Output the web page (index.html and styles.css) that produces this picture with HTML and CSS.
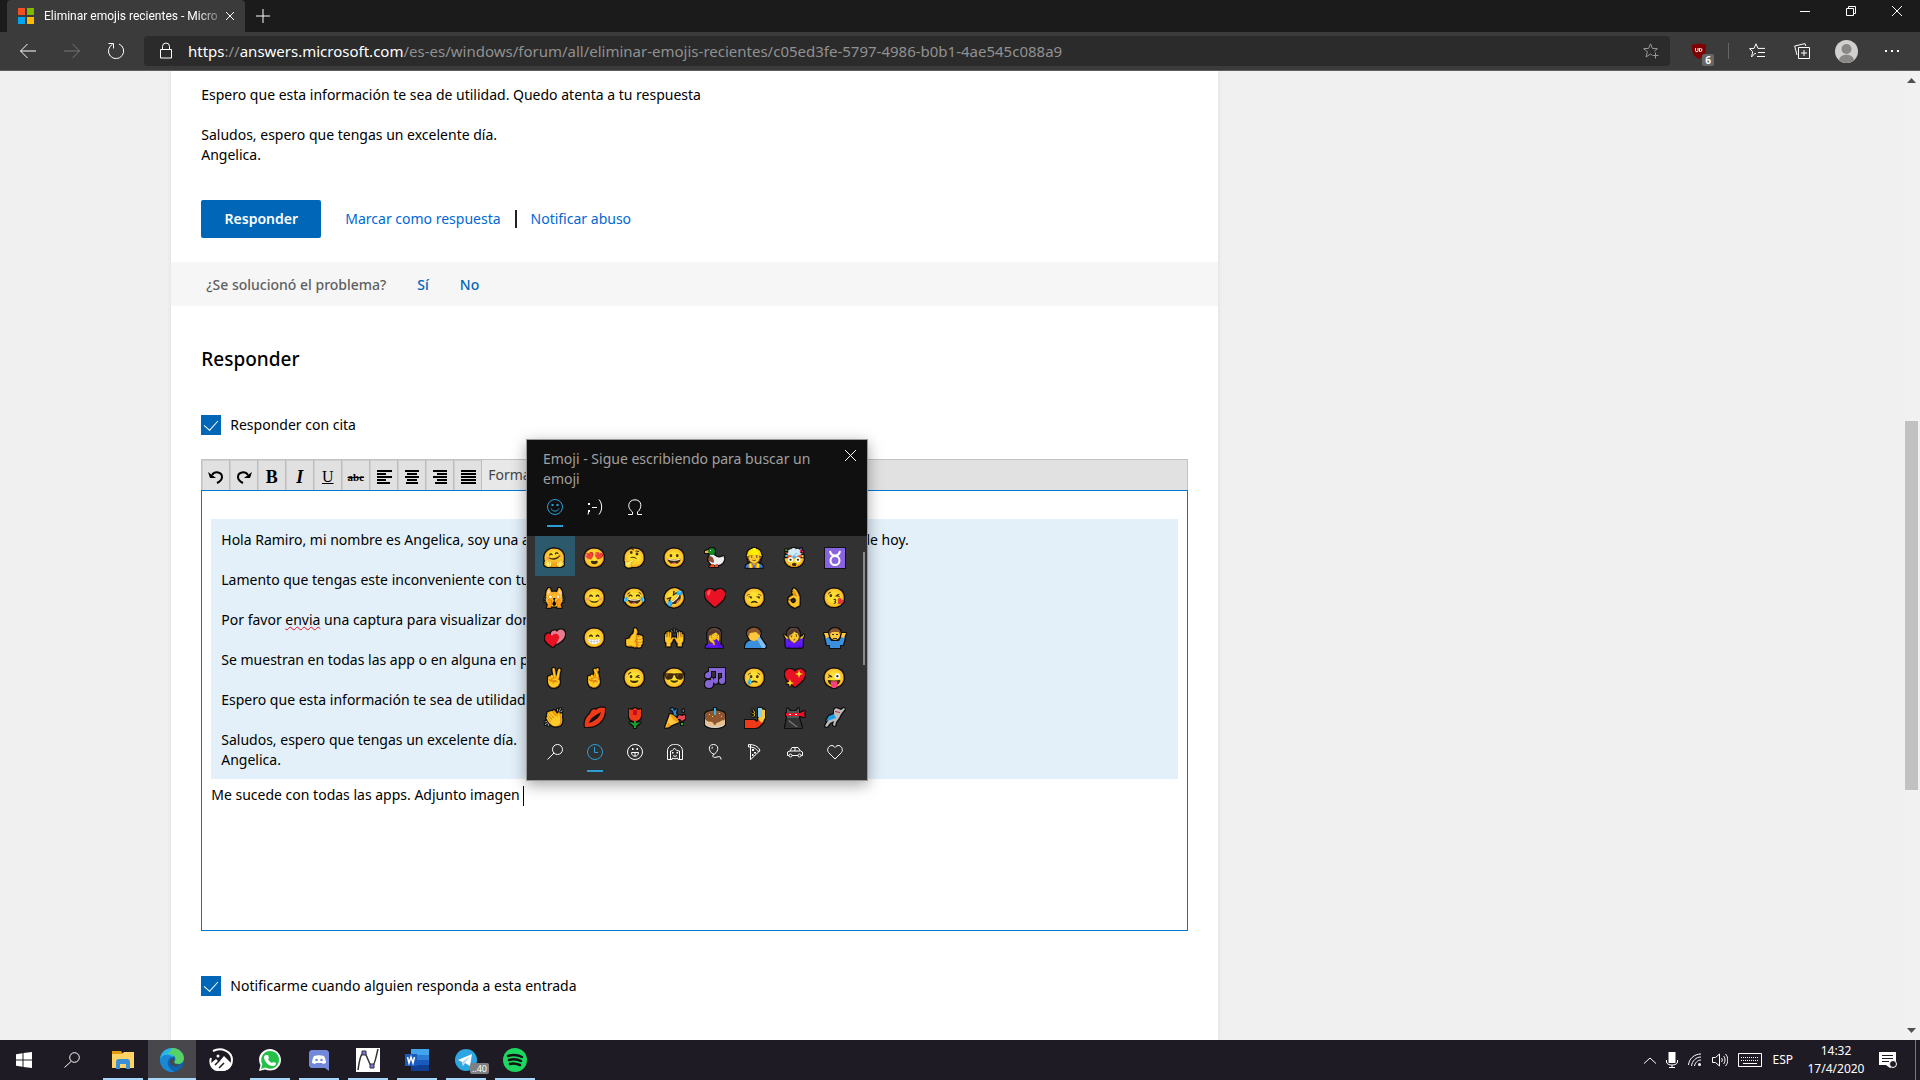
FILE: index.html
```
<!DOCTYPE html>
<html lang="es">

<head>
    <meta charset="UTF-8">
    <meta name="viewport" content="width=device-width, initial-scale=1.0">
    <title>Eliminar emojis recientes - Microsoft Community</title>
    <link rel="stylesheet" href="styles.css">
</head>

<body>
    <div class="tabbar">
        <div class="tab">
            <svg class="favicon" width="16" height="16" viewBox="0 0 16 16"><path fill="#f25022" d="M0 0h7v7H0z"/><path fill="#7fba00" d="M9 0h7v7H9z"/><path fill="#00a4ef" d="M0 9h7v7H0z"/><path fill="#ffb900" d="M9 9h7v7H9z"/></svg>
            <span class="tab-title">Eliminar emojis recientes - Micro</span>
            <button class="tab-close" aria-label="Cerrar pestaña"><svg width="10" height="10" viewBox="0 0 10 10"><path d="M1 1l8 8M9 1l-8 8"/></svg></button>
        </div>
        <button class="new-tab" aria-label="Nueva pestaña"><svg width="14" height="14" viewBox="0 0 14 14"><path d="M7 0v14M0 7h14"/></svg></button>
        <div class="window-buttons">
            <button aria-label="Minimizar"><svg width="10" height="10" viewBox="0 0 10 10"><path d="M0 5.5h10"/></svg></button>
            <button aria-label="Restaurar"><svg width="10" height="10" viewBox="0 0 10 10"><path d="M.5 2.5h7v7h-7zM2.500 2.500v-2h7v7h-2"/></svg></button>
            <button aria-label="Cerrar"><svg width="10" height="10" viewBox="0 0 10 10"><path d="M0 0l10 10M10 0L0 10"/></svg></button>
        </div>
    </div>

    <div class="navbar">
        <button class="nav-button" aria-label="Atrás"><svg width="18" height="16" viewBox="0 0 18 16"><path d="M17 8H1.500M8.500 1l-7 7 7 7"/></svg></button>
        <button class="nav-button dim" aria-label="Adelante"><svg width="18" height="16" viewBox="0 0 18 16"><path d="M1 8h15.500M9.500 1l7 7-7 7"/></svg></button>
        <button class="nav-button" aria-label="Actualizar"><svg width="18" height="18" viewBox="0 0 18 18"><path d="M12 2a7.600 7.600 0 1 1-6.500.3M1.500 1.500h5v5"/></svg></button>
        <div class="address">
            <svg class="lock" width="12" height="18" viewBox="0 0 12 18"><path d="M.5 7.500h11v8.500H.500zM2.500 7.500V4.500a3.500 3.500 0 0 1 7 0v3"/></svg>
            <span class="url"><b>https</b>://<b>answers.microsoft.com</b>/es-es/windows/forum/all/eliminar-emojis-recientes/c05ed3fe-5797-4986-b0b1-4ae545c088a9</span>
            <button class="star" aria-label="Agregar a favoritos"><svg width="16" height="16" viewBox="0 0 16 16"><path d="M9 12l-1.500-1L3 14l1.400-5.300L.6 5.700l5-.3L7.500.800l1.900 4.600 5 .3-3 2.500M12.500 9.500v6M9.500 12.500h6"/></svg></button>
        </div>
        <button class="ext" aria-label="uBlock Origin">
            <svg width="14" height="16" viewBox="0 0 14 16"><path fill="#800000" d="M7 0c2 1.300 4.500 1.700 7 1.500C14.300 9 13 13 7 16 1 13-.3 9 0 1.500 2.500 1.700 5 1.300 7 0z"/><path fill="none" stroke="#fff" d="M3.500 5v2.500a1 1 0 0 0 2.500 0V5M7.500 5.500v3h1a1.500 1.500 0 0 0 0-3z"/></svg>
            <span class="ext-count">6</span>
        </button>
        <span class="nav-line"></span>
        <button class="nav-tool" aria-label="Favoritos"><svg width="16" height="16" viewBox="0 0 16 16"><path d="M7 11l-1-.8L2.500 14l1.200-5.300L.5 5.700l4.500-.3L7 .8l2 4.600h7M9 9.500h7M8 13.500h8"/></svg></button>
        <button class="nav-tool" aria-label="Colecciones"><svg width="16" height="16" viewBox="0 0 16 16"><path d="M4.500 4.500h11v11h-11zM10 7v6M7 10h6M3 12L.7 3 11 .6l.8 2.400"/></svg></button>
        <button class="nav-tool" aria-label="Perfil"><svg class="avatar" width="23" height="23" viewBox="0 0 23 23"><circle cx="11.500" cy="11.500" r="11.500" fill="#d2d0ce"/><circle cx="11.500" cy="9" r="5" fill="#8a8886"/><path fill="#8a8886" d="M4 20c1-7 14-7 15 0-4 4-11 4-15 0z"/></svg></button>
        <button class="nav-tool" aria-label="Más"><svg width="14" height="4" viewBox="0 0 14 4"><path class="solid" d="M0 1h2v2H0zM6 1h2v2H6zM12 1h2v2h-2z"/></svg></button>
    </div>

    <div class="viewport">
        <div class="page">
            <main class="card">
                <div class="answer">
                    <p>Espero que esta información te sea de utilidad. Quedo atenta a tu respuesta</p>
                    <p>Saludos, espero que tengas un excelente día.<br>Angelica.</p>
                    <div class="actions">
                        <button class="reply">Responder</button>
                        <a href="#">Marcar como respuesta</a>
                        <span class="separator"></span>
                        <a href="#">Notificar abuso</a>
                    </div>
                </div>
                <div class="solved">
                    <span>¿Se solucionó el problema?</span>
                    <a href="#">Sí</a>
                    <a href="#">No</a>
                </div>
                <div class="form">
                    <h2>Responder</h2>
                    <label class="check"><input type="checkbox" checked>Responder con cita</label>
                    <div class="toolbar">
                        <button aria-label="Deshacer"><svg width="16" height="16" viewBox="0 0 16 16"><path class="thick" d="M4 6c3-4.500 10-3 10 2 0 3-2 4.500-5 6"/><path d="M0 3l2 6h6z"/></svg></button>
                        <button aria-label="Rehacer"><svg width="16" height="16" viewBox="0 0 16 16"><path class="thick" d="M12 6C9 1.500 2 3 2 8c0 3 2 4.500 5 6"/><path d="M16 3l-2 6H8z"/></svg></button>
                        <button class="serif bold" aria-label="Negrita">B</button>
                        <button class="serif bold italic" aria-label="Cursiva">I</button>
                        <button class="serif underline" aria-label="Subrayado">U</button>
                        <button class="serif strike" aria-label="Tachado">abc</button>
                        <button aria-label="Alinear a la izquierda"><svg width="16" height="16" viewBox="0 0 16 16"><path d="M1 1h15v2H1zM1 4h9v2H1zM1 7h15v2H1zM1 10h9v2H1zM1 13h13v2H1z"/></svg></button>
                        <button aria-label="Centrar"><svg width="16" height="16" viewBox="0 0 16 16"><path d="M1 1h14v2H1zM3 4h10v2H3zM1 7h14v2H1zM3 10h10v2H3zM2 13h12v2H2z"/></svg></button>
                        <button aria-label="Alinear a la derecha"><svg width="16" height="16" viewBox="0 0 16 16"><path d="M1 1h14v2H1zM5 4h10v2H5zM1 7h14v2H1zM5 10h10v2H5zM3 13h12v2H3z"/></svg></button>
                        <button aria-label="Justificar"><svg width="16" height="16" viewBox="0 0 16 16"><path d="M1 1h15v2H1zM1 4h15v2H1zM1 7h15v2H1zM1 10h15v2H1zM1 13h15v2H1z"/></svg></button>
                        <select aria-label="Formato"><option>Formato</option></select>
                    </div>
                    <div class="editor" role="textbox" aria-label="Respuesta" contenteditable="true" spellcheck="false">
                        <blockquote>
                            <p>Hola Ramiro, mi nombre es Angelica, soy una asesora independiente y te ayudo en tu duda el día de hoy.</p>
                            <p>Lamento que tengas este inconveniente con tu equipo.</p>
                            <p>Por favor <span class="misspelled">envia</span> una captura para visualizar donde se muestran.</p>
                            <p>Se muestran en todas las app o en alguna en particular.</p>
                            <p>Espero que esta información te sea de utilidad. Quedo atenta a tu respuesta</p>
                            <p>Saludos, espero que tengas un excelente día.<br>Angelica.</p>
                        </blockquote>
                        <p>Me sucede con todas las apps. Adjunto imagen <span class="caret"></span></p>
                    </div>
                    <label class="check"><input type="checkbox" checked>Notificarme cuando alguien responda a esta entrada</label>
                </div>
            </main>
        </div>
        <div class="scrollbar">
            <svg width="9" height="5" viewBox="0 0 9 5"><path d="M4.500 0L9 5H0z"/></svg>
            <div class="track"><div class="thumb"></div></div>
            <svg width="9" height="5" viewBox="0 0 9 5"><path d="M0 0h9L4.500 5z"/></svg>
        </div>
    </div>

    <div class="emoji-panel">
        <div class="emoji-head">
            <div class="emoji-title">
                <span>Emoji - Sigue escribiendo para buscar un emoji</span>
                <button aria-label="Cerrar"><svg width="11" height="11" viewBox="0 0 11 11"><path d="M0 0l11 11M11 0L0 11"/></svg></button>
            </div>
            <div class="emoji-tabs">
                <button class="active" aria-label="Emoji"><svg width="16" height="16" viewBox="0 0 16 16"><circle cx="8" cy="8" r="7.500"/><path d="M4 9.500c1.500 3.500 6.500 3.500 8 0"/><path class="solid" d="M4.500 5h2v2h-2zM9.500 5h2v2h-2z"/></svg></button>
                <button aria-label="Kaomoji"><svg width="16" height="16" viewBox="0 0 16 16"><path d="M5 8.500h5M12 .500c3.500 4 3.500 11 0 15M2 11.500l-1 4"/><path class="solid" d="M1 4h2v2H1zM1 11h2v2H1z"/></svg></button>
                <button aria-label="Símbolos"><svg width="16" height="16" viewBox="0 0 16 16"><path d="M1 15.500h4.500V13C-.5 9 1 .8 8 .8S15.500 9 10.500 13v2.500H15"/></svg></button>
            </div>
        </div>
        <div class="emoji-body">
            <div class="emoji-grid">
                <button class="active"><span>🤗</span></button>
                <button><span>😍</span></button>
                <button><span>🤔</span></button>
                <button><span>😀</span></button>
                <button aria-label="Pato"><svg viewBox="0 0 22 22"><path fill="#ffb02e" d="M1 4l4-1v3H1z"/><path fill="#108a22" d="M4 4c1-4 7-4 7 0 0 2-1 3-1 5H6c0-3-2-3-2-5z"/><path fill="#eee" d="M6 8h4c3 3 6 3 10 1-1 2 1 2 0 4-2 5-5 5-9 5-5 0-8-5-5-10z"/><path fill="#8e4a33" d="M5 9c3 0 5 2 5 6-1 2-5-1-6-2z"/><path fill="#f4511e" d="M8 17h2v3H5zM12 17h2v3h-4z"/><path fill="#fff" d="M6 3h1v1H6z"/></svg></button>
                <button><span>👷</span></button>
                <button><span>🤯</span></button>
                <button aria-label="Tauro"><svg viewBox="0 0 22 22"><path fill="#8763e0" d="M1 1h20v20H1z"/><circle class="line" cx="11" cy="13.500" r="4.500"/><path class="line" d="M6 4c1 6 9 6 10 0"/></svg></button>

                <button><span>🙀</span></button>
                <button><span>😊</span></button>
                <button><span>😂</span></button>
                <button><span>🤣</span></button>
                <button aria-label="Corazón"><svg viewBox="0 0 22 22"><path fill="#e81224" d="M11 20C5 15 1 12 1 7c0-5 7-7 10-2 3-5 10-3 10 2 0 5-4 8-10 13z"/><path fill="#ff5b5b" d="M3 7c0-3 2-4 4-4L5 9z"/></svg></button>
                <button><span>😒</span></button>
                <button><span>👌</span></button>
                <button><span>😘</span></button>

                <button aria-label="Dos corazones"><svg viewBox="0 0 22 22"><path fill="#e87c8e" d="M13 17c5-3 8-6 8-10 0-5-6-6-8-2-2-3-7-1-6 3 0 4 3 6 6 9z"/><path fill="#e81224" d="M9 20c-4-3-8-5-8-9 0-5 5-6 7-2 2-4 8-2 7 2-1 4-4 7-6 9z"/></svg></button>
                <button><span>😁</span></button>
                <button><span>👍</span></button>
                <button><span>🙌</span></button>
                <button><span>🤦‍♀️</span></button>
                <button aria-label="Hombre con la mano en la cara"><svg viewBox="0 0 22 22"><path fill="#3b8fdd" d="M1 21c0-6 4-8 9-8 6 0 10 3 10 8z"/><circle cx="10" cy="8" r="6" fill="#ffc83d"/><path fill="#8e562e" d="M3 8c-1-9 13-10 14-1l-2 1-3-3-6 1-1 3z"/><path fill="#ffc83d" d="M8 8l5-2 3 4-2 4z"/><path fill="#7fbdf2" d="M13 12l3-2 6 9-1 2h-3z"/></svg></button>
                <button><span>🤷‍♀️</span></button>
                <button aria-label="Hombre encogiéndose de hombros"><svg viewBox="0 0 22 22"><path fill="#3b8fdd" d="M1 10l3-1 3 5h8l3-5 3 1-2 8h-3v3H6v-3H3z"/><path fill="#ffc83d" d="M0 6h4l1 4-3 1zM22 6h-4l-1 4 3 1z"/><circle cx="11" cy="8" r="5" fill="#ffc83d"/><path fill="#8e562e" d="M5 8c-1-9 13-9 12 0l-2-3H8z"/><path fill="#333" d="M8 7h2v1H8zM12 7h2v1h-2zM9 11h4v1H9z"/></svg></button>

                <button><span>✌️</span></button>
                <button><span>🤞</span></button>
                <button><span>😉</span></button>
                <button><span>😎</span></button>
                <button aria-label="Notas musicales"><svg viewBox="0 0 22 22"><path fill="#8764d8" d="M1 9c0-3 2-4 4-4V1h16v13c0 4-6 4-6 0 0-3 2-3 3-3V6h-4v8c0 4-5 3-5 0 0-2 1-3 3-3V4H7v5c0 3-6 3-6 0z"/><circle cx="5" cy="17" r="4" fill="#8764d8"/><path fill="#8764d8" d="M7 11h2v6H7z"/></svg></button>
                <button><span>😢</span></button>
                <button aria-label="Corazón brillante"><svg viewBox="0 0 22 22"><path fill="#e81224" d="M11 20C5 15 1 12 1 7c0-5 7-7 10-2 3-5 10-3 10 2 0 5-4 8-10 13z"/><path fill="#ffe11a" d="M15 3l1 3 3 1-3 1-1 3-1-3-3-1 3-1zM6 12l1 3 3 1-3 1-1 3-1-3-3-1 3-1z"/></svg></button>
                <button><span>😜</span></button>

                <button><span>👏</span></button>
                <button aria-label="Beso"><svg viewBox="0 0 22 22"><path fill="#f03a17" d="M1 20c-1-7 2-11 5-13 1-4 4-6 6-4 3-3 6-2 9-2 0 6-1 10-4 13-4 5-9 6-16 6z"/><path fill="#111" d="M5 16c1-5 7-8 12-11-1 5-6 9-12 11z"/></svg></button>
                <button aria-label="Rosa"><svg viewBox="0 0 22 22"><path fill="#16a12a" d="M10 12h2v9h-2zM5 15l5 1v3zM17 15l-5 1v3z"/><path fill="#f03a17" d="M5 2l3 1 3-2 3 2 3-1v7c0 3-3 5-6 5s-6-2-6-5z"/><path fill="#c50f1f" d="M9 3h4v5H9z"/></svg></button>
                <button aria-label="Fiesta"><svg viewBox="0 0 22 22"><path fill="#ffc83d" d="M1 21l5-14 9 8z"/><path fill="#f59b14" d="M3 21l4-2-3-4zM6 7c3 0 9 5 9 8-3 1-8-4-9-8z"/><path fill="#2a8fd8" d="M6 2l3-1 1 3 3-2-1 4 1 3-3-1-1-4zM18 4l2-2v3z"/><path fill="#e74856" d="M13 12l2-4 3 1 3-1v4l-3 2-2-2z"/><path fill="#16c60c" d="M17 16h2v2h-2z"/></svg></button>
                <button aria-label="Torta"><svg viewBox="0 0 22 22"><ellipse cx="11" cy="17" rx="10" ry="4" fill="#ddd"/><path fill="#e8c193" d="M1 8h20v9c-4 4-16 4-20 0z"/><path fill="#8e562e" d="M1 8c0-6 20-6 20 0v4c-2 3-2 0-4 2s-3 0-5 3-2-1-4-2-4 1-7-3z"/><path fill="#31b6ea" d="M10 1h2v7h-2z"/><path fill="#ffc83d" d="M5 7h1v1H5zM15 6h1v1h-1zM8 9h1v1H8zM17 9h1v1h-1z"/></svg></button>
                <button aria-label="Selfi"><svg viewBox="0 0 22 22"><path fill="#f03a17" d="M1 13h9l3 2 3-4 4 3c-3 4-6 7-9 7H1z"/><path fill="#ffc83d" d="M16 2l5 1v8l-3 5-4-4 2-4z"/><path fill="#7fd0f5" d="M14 1h4v9h-4z"/><path fill="#ffe11a" d="M8 1l3 4 0 2zM6 5l5 2v1zM7 10l4-2v1z"/></svg></button>
                <button aria-label="Gato ninja"><svg viewBox="0 0 22 22"><path fill="#555" d="M3 1l3 3h6l3-3v10H3z"/><path fill="#333" d="M3 11h12l3 10H1z"/><path fill="#e81224" d="M2 6h14l5-2-1 3 1 3-5-1H2z"/><path fill="#fff" d="M5 7h2v1H5zM11 7h2v1h-2z"/><path fill="#777" d="M5 13l9 7h-2l-8-6z"/></svg></button>
                <button aria-label="Gato volador"><svg viewBox="0 0 22 22"><path fill="#bbb" d="M10 3l2-2 5 2 3-2 1 1-4 5-2 4-3 4-1 4-2-1 1-4-4 2-3 4-2-1 4-7 5-4z"/><path fill="#1e9fe8" d="M10 7l2 4-6 2-4 1 3-5z"/><path fill="#e81224" d="M11 4l5 1v1l-5-1z"/></svg></button>
            </div>
            <div class="emoji-scroll"></div>
        </div>
        <div class="emoji-cats">
            <button aria-label="Buscar"><svg width="16" height="16" viewBox="0 0 16 16"><circle cx="10.500" cy="5.500" r="5"/><path d="M7 9l-6.500 6.500"/></svg></button>
            <button class="active" aria-label="Recientes"><svg width="16" height="16" viewBox="0 0 16 16"><circle cx="8" cy="8" r="7.500"/><path d="M7.500 3v5.500H11"/></svg></button>
            <button aria-label="Caras"><svg width="16" height="16" viewBox="0 0 16 16"><circle cx="8" cy="8" r="7.500"/><path d="M4.500 8.500h7c0 5-7 5-7 0zM8 9v3"/><path class="solid" d="M5 4h1.500v2H5zM9.500 4H11v2H9.500z"/></svg></button>
            <button aria-label="Personas"><svg width="16" height="16" viewBox="0 0 16 16"><path d="M.500 15.500V7c0-9 15-9 15 0v8.500H11l-.5-1.500c-2 1-3 1-5 0L5 15.500zM3.500 15V7c1.500 0 3-1 4-3 1 2 3 3 5 3v8M6 11.500c1 1 3 1 4 0"/><path class="solid" d="M5 8h1.500v1.500H5zM9.500 8H11v1.500H9.500z"/></svg></button>
            <button aria-label="Celebraciones"><svg width="16" height="16" viewBox="0 0 16 16"><path d="M6 10C1 7 1 .5 6.500.500S12 7 7.500 10zM7 10c-3 3 0 4 3 3s4 0 4 2.500M6 3c-1 0-1 1-1 2"/></svg></button>
            <button aria-label="Comida"><svg width="16" height="16" viewBox="0 0 16 16"><path d="M3.500.700v15L13 6.500M1.500.500C7 .5 11 2 13 6.500l-2 1M1.500.500V3C6 3 9 4 11 7.500"/><path class="solid" d="M5 5h2v2H5zM7 8h2v1.500H7zM5 10h1.500v2H5z"/></svg></button>
            <button aria-label="Transporte"><svg width="16" height="16" viewBox="0 0 16 16"><path d="M2 11.500H.500V8L3 7l2-3.500h6L13.500 7l2 1v3.500H14M5 11.500h6M3 7h10M8 3.500V7"/><circle cx="3.500" cy="11.500" r="1.500"/><circle cx="12.500" cy="11.500" r="1.500"/></svg></button>
            <button aria-label="Símbolos"><svg width="16" height="16" viewBox="0 0 16 16"><path d="M8 15L1.500 8.500c-3-4.500 3-10 6.500-5 3.500-5 9.500.500 6.500 5z"/></svg></button>
        </div>
    </div>

    <div class="taskbar">
        <button aria-label="Inicio"><svg width="16" height="16" viewBox="0 0 16 16"><path fill="#fff" d="M0 2.200L6.500 1.300v6.200H0zM7.500 1.100L16 0v7.500H7.500zM0 8.500h6.500v6.200L0 13.800zM7.500 8.500H16V16l-8.500-1.100z"/></svg></button>
        <button aria-label="Buscar"><svg width="16" height="16" viewBox="0 0 16 16"><path fill="none" stroke="#fff" d="M7 9.500L.5 15.500M10.500.700a4.800 4.800 0 1 1 0 9.600 4.800 4.800 0 0 1 0-9.600z"/></svg></button>
        <button class="app open" aria-label="Explorador de archivos"><svg width="22" height="20" viewBox="0 0 22 20"><path fill="#e39a0b" d="M0 1h9l2 3H0z"/><path fill="#ffd464" d="M0 4h10l2-2h10v16H0z"/><path fill="#3a8fd9" d="M4 19v-7c0-2 1-3 3-3h8c2 0 3 1 3 3v7h-4v-5H8v5z"/></svg></button>
        <button class="app open current" aria-label="Microsoft Edge"><svg width="24" height="24" viewBox="0 0 24 24"><circle cx="12" cy="12" r="12" fill="#0d63b4"/><path fill="#2bb4e6" d="M0 12C0 5 5 0 12 0c4 0 8 2 10 5L12 9C8 6 2 7 0 12z"/><path fill="#56d364" d="M12 0c7 0 12 5 12 10 0 4-3 6-6 6-2 0-4-1-4-2 3-3 1-8-5-8C6 6 13 2 12 0z"/><path fill="#1b88d2" d="M0 12c2-6 9-6 12-3-3 1-5 4-4 8 1 3 4 6 7 7C7 25 0 20 0 12z"/><path fill="#48484c" d="M14 14c0 2 3 4 8 2-4 4-12 3-12-2 0-3 2-4 3-4 2 1 1 3 1 4z"/></svg></button>
        <button class="app" aria-label="Fotos"><svg width="24" height="24" viewBox="0 0 24 24"><path fill="none" stroke="#fff" stroke-width="2" d="M4 3c8-4 19 0 19 9 0 5-3 9-8 10H8C3 21 0 15 2 10"/><path fill="#fff" d="M1 16l6-5 3 3 5-6 8 8c-2 5-5 7-10 7s-10-2-12-7z"/><circle cx="9" cy="8" r="1.500" fill="#fff"/><path stroke="#1f1b24" stroke-width="1.500" d="M6 17l4-4M10 20l5-5"/></svg></button>
        <button class="app open" aria-label="WhatsApp"><svg width="22" height="22" viewBox="0 0 22 22"><path fill="#fff" d="M0 22l1.500-6C-3 7 4 0 11 0c6 0 11 5 11 11 0 7-7 13-16 9.500z"/><path fill="#25c047" d="M2 20l1.300-4.500C0 8 5 2 11 2s9 4 9 9c0 6-6 11-13.500 7.500z"/><path fill="#fff" d="M7 6h2l1 3-1 1c1 2 2 3 4 4l1-1 3 1c0 2-1 3-3 3-5 0-9-5-9-9 0-1 1-2 2-2z"/></svg></button>
        <button class="app open" aria-label="Discord"><svg width="20" height="22" viewBox="0 0 20 22"><path fill="#7289da" d="M2 1h16l2 2v19l-4-3H2l-2-2V3z"/><path fill="#fff" d="M5 7c3-1 7-1 10 0 1 2 2 4 2 7l-3 1-1-1H7l-1 1-3-1c0-3 1-5 2-7z"/><circle cx="7.500" cy="11" r="1.300" fill="#7289da"/><circle cx="12.500" cy="11" r="1.300" fill="#7289da"/></svg></button>
        <button class="app open" aria-label="Gráficos"><svg width="24" height="24" viewBox="0 0 24 24"><path fill="#fff" d="M0 0h24v24H0z"/><path fill="none" stroke="#333" stroke-width="1.500" d="M2 22C3 14 5 4 8 5c3 0 5 13 8 13 3 0 4-10 6-17"/><path fill="#7b74dd" stroke="#333" d="M6 3h4v4H6zM14 16h4v4h-4z"/></svg></button>
        <button class="app open" aria-label="Word"><svg width="24" height="22" viewBox="0 0 24 22"><path fill="#41a5ee" d="M6 0h18v6H6z"/><path fill="#2b7cd3" d="M6 6h18v5H6z"/><path fill="#185abd" d="M6 11h18v5H6z"/><path fill="#103f91" d="M6 16h18v6H6z"/><path fill="#185abd" d="M0 5h12v12H0z"/><path fill="none" stroke="#fff" stroke-width="1.500" d="M2.500 8l1.500 6 2-6 2 6 1.500-6"/></svg></button>
        <button class="app open" aria-label="Telegram"><svg width="22" height="22" viewBox="0 0 22 22"><circle cx="11" cy="11" r="11" fill="#2ca5e0"/><path fill="#fff" d="M3 11l14-6-2 12-5-3-2 3-1-4z"/><path fill="#b6d9ec" d="M7 13l8-6-5 7-2 3z"/></svg><span class="badge">..40</span></button>
        <button class="app open" aria-label="Spotify"><svg width="24" height="24" viewBox="0 0 24 24"><circle cx="12" cy="12" r="12" fill="#1ed760"/><path fill="none" stroke="#111" stroke-width="2.500" stroke-linecap="round" d="M5 8c5-1.500 10-1 14 1M6 12c4-1 8-1 12 1M7 16c3-1 6-.500 10 1"/></svg></button>

        <div class="tray">
            <svg width="12" height="7" viewBox="0 0 12 7"><path d="M0 6.500L6 1l6 5.500"/></svg>
            <svg width="12" height="16" viewBox="0 0 12 16"><path class="solid" d="M2.500 0h7v11h-7z"/><path d="M.5 8v2c0 4 11 4 11 0V8M6 13v2.500M3 15.500h6"/></svg>
            <svg width="14" height="14" viewBox="0 0 14 14"><path d="M.5 12C1 6 6 1 13 1M3.500 13C4 8 8 4 13 4M6.500 13c.5-3 3-6 6.500-6"/><circle class="solid" cx="11.500" cy="11.500" r="1.500"/></svg>
            <svg width="16" height="14" viewBox="0 0 16 14"><path d="M.5 4.500h3l4-3.500v12l-4-3.500h-3zM9.500 5c1 1 1 3 0 4M11.500 3c2 2 2 6 0 8M13.500 1c3 3 3 9 0 12"/></svg>
            <svg width="24" height="14" viewBox="0 0 24 14"><path d="M.5 .5h23v13H.5zM5 10.500h14"/><path stroke-dasharray="1 1" d="M3 4.500h18M3 7.500h18"/></svg>
            <span class="lang">ESP</span>
            <time class="clock">14:32<br>17/4/2020</time>
            <svg width="18" height="17" viewBox="0 0 18 17"><path class="solid" d="M0 0h17v12l-6 4-4-3H0z"/><path class="dark" d="M3 3.500h11M3 6.500h11M3 9.500h7"/><circle cx="14" cy="12" r="3.500" class="quiet"/><path class="dark" d="M12 14l4-4"/></svg>
            <span class="peek"></span>
        </div>
    </div>
</body>

</html>
```
FILE: styles.css
```
* {
    box-sizing: border-box;
}

body {
    font-family: "Noto Sans", "Open Sans", sans-serif;
    font-size: 14px;
    line-height: 20px;
    color: #000;
    display: flex;
    flex-direction: column;
    height: 100vh;
    margin: 0;
    overflow: hidden;
}

button,
select {
    font: inherit;
    color: inherit;
    background: none;
    border: none;
    border-radius: 0;
    padding: 0;
    margin: 0;
}

button {
    display: flex;
    align-items: center;
    justify-content: center;
}

p,
h2,
blockquote {
    margin: 0;
}

a {
    color: #0067d8;
    text-decoration: none;
}

svg {
    display: block;
    flex: none;
}

/* browser window */
.tabbar {
    display: flex;
    flex: none;
    height: 32px;
    padding-left: 7px;
    background-color: #1b1b1b;
}

.tabbar svg,
.navbar svg,
.emoji-head svg,
.emoji-cats svg,
.tray svg {
    fill: none;
    stroke: #fff;
}

.tabbar .favicon,
.ext svg,
.navbar .avatar {
    stroke: none;
}

svg .solid {
    fill: currentColor;
    stroke: none;
}

.tab {
    display: flex;
    align-items: center;
    width: 238px;
    padding: 0 10px 0 11px;
    background-color: #3b3b3b;
    border-radius: 4px 4px 0 0;
    color: #fff;
    font-family: Roboto, sans-serif;
    font-size: 12px;
}

.tab-title {
    flex: 1;
    margin: 0 4px 0 10px;
    white-space: nowrap;
    mask-image: linear-gradient(90deg, #000 86%, transparent 104%);
}

.new-tab {
    width: 36px;
}

.window-buttons {
    display: flex;
    margin-left: auto;
}

.window-buttons button {
    width: 46px;
    height: 22px;
}

.navbar {
    display: flex;
    flex: none;
    align-items: center;
    height: 39px;
    padding: 0 6px;
    background-color: #3b3b3b;
    border-bottom: 1px solid #5f5d5f;
    color: #fff;
}

.nav-button {
    width: 44px;
    height: 30px;
}

.nav-button.dim svg {
    stroke: #777;
}

.address {
    display: flex;
    flex: 1;
    align-items: center;
    height: 30px;
    margin-left: 6px;
    padding: 0 11px 0 16px;
    background-color: #2b2b2b;
    border-radius: 4px;
}

.url {
    flex: 1;
    margin-left: 16px;
    font-size: 15px;
    color: #919191;
    white-space: nowrap;
}

.url b {
    font-weight: normal;
    color: #fff;
}

.navbar .star svg {
    stroke: #9a9a9a;
}

.ext {
    position: relative;
    width: 58px;
    height: 30px;
}

.ext-count {
    position: absolute;
    right: 14px;
    bottom: 0;
    width: 12px;
    height: 12px;
    background-color: #666;
    border-radius: 2px;
    font-size: 10px;
    font-weight: bold;
    line-height: 12px;
}

.nav-line {
    width: 1px;
    height: 16px;
    margin-right: 5px;
    background-color: #666;
}

.nav-tool {
    width: 45px;
    height: 30px;
}

/* page */
.viewport {
    display: flex;
    flex: 1;
    min-height: 0;
    overflow: hidden;
    background-color: #f0f0f0;
}

.page {
    display: flex;
    flex: 1;
}

.card {
    width: 55%;
    margin-left: 9%;
    padding-top: 14px;
    background-color: #fff;
    box-shadow: 0 0 4px #ddd;
}

.answer {
    padding: 0 30px 24px;
}

.answer p {
    margin-bottom: 20px;
}

.actions {
    display: flex;
    align-items: center;
    padding-top: 15px;
}

.reply {
    width: 120px;
    height: 38px;
    margin-right: 24px;
    background-color: #0067b8;
    border-radius: 2px;
    color: #fff;
    font-weight: 600;
}

.separator {
    width: 2px;
    height: 18px;
    margin: 0 14px;
    background-color: #222;
}

.solved {
    display: flex;
    gap: 31px;
    padding: 13px 35px 11px;
    background-color: #f6f6f6;
    color: #616161;
    font-weight: 500;
}

.solved a {
    color: #0067b8;
}

.form {
    padding: 39px 30px 0;
}

h2 {
    font-size: 19px;
    font-weight: 500;
    line-height: 28px;
    margin-bottom: 42px;
}

.check {
    display: flex;
    align-items: center;
    gap: 9px;
}

.check input {
    appearance: none;
    display: flex;
    justify-content: center;
    width: 20px;
    height: 20px;
    margin: 0;
    background-color: #0067b8;
}

.check input:checked::before {
    content: "";
    width: 7px;
    height: 12px;
    margin-top: 2px;
    border: solid #fff;
    border-width: 0 1px 1px 0;
    rotate: 42deg;
}

.toolbar {
    display: flex;
    height: 31px;
    margin-top: 24px;
    background-color: #e1e1e1;
    border: 1px solid #c2c2c2;
    border-bottom: none;
}

.toolbar button {
    width: 28px;
    padding-top: 3px;
    border-right: 1px solid #bdbdbd;
    box-shadow: inset 1px 1px #d0d0d0;
}

.toolbar .thick {
    fill: none;
    stroke: #000;
    stroke-width: 2;
}

.serif {
    font-family: "Liberation Serif", serif;
    font-size: 18px;
}

.bold {
    font-weight: bold;
}

.italic {
    font-style: italic;
}

.underline {
    font-size: 16px;
    text-decoration: underline;
}

.strike {
    font-size: 11px;
    font-weight: bold;
    text-decoration: line-through;
}

.toolbar select {
    appearance: none;
    width: 110px;
    padding-left: 6px;
    background-color: #e8e8e8;
    color: #444;
}

.editor {
    min-height: 441px;
    margin-bottom: 45px;
    padding: 28px 9px;
    border: 1px solid #0078d4;
    outline: none;
}

blockquote {
    margin-bottom: 6px;
    padding: 11px 10px 9px;
    background-color: #e3f0f9;
}

blockquote p + p {
    margin-top: 20px;
}

.misspelled {
    text-decoration: underline wavy #e81123 1px;
}

.caret {
    display: inline-block;
    width: 1px;
    height: 20px;
    background-color: #000;
    vertical-align: middle;
}

.scrollbar {
    display: flex;
    flex-direction: column;
    align-items: center;
    justify-content: space-between;
    width: 17px;
    padding: 7px 0;
    background-color: #f1f1f1;
    fill: #505050;
}

.track {
    flex: 1;
    width: 13px;
}

.thumb {
    height: 39%;
    margin-top: 338px;
    background-color: #c1c1c1;
}

/* emoji picker, floats over the page */
.emoji-panel {
    position: absolute;
    left: 526px;
    top: 439px;
    width: 342px;
    background-color: #323232;
    border: 1px solid #999;
    box-shadow: 0 4px 14px rgba(0, 0, 0, 0.35);
    color: #fff;
}

.emoji-head {
    height: 96px;
    padding: 9px 8px 0;
    background-color: #101010;
}

.emoji-title {
    display: flex;
    align-items: flex-start;
    justify-content: space-between;
    padding: 0 3px 0 8px;
    color: #a0a0a0;
}

.emoji-title span {
    width: 280px;
}

.emoji-title button {
    padding: 1px 0;
}

.emoji-tabs,
.emoji-cats {
    display: flex;
}

.emoji-tabs button,
.emoji-cats button {
    width: 40px;
    height: 39px;
    padding-top: 10px;
    flex-direction: column;
    justify-content: flex-start;
}

.emoji-tabs .active,
.emoji-cats .active {
    color: #2a9fd6;
}

.emoji-head .active svg,
.emoji-cats .active svg {
    stroke: #2a9fd6;
}

.emoji-tabs .active::after,
.emoji-cats .active::after {
    content: "";
    width: 16px;
    height: 2px;
    margin-top: 10px;
    background-color: #2a9fd6;
}

.emoji-body {
    display: flex;
    justify-content: space-between;
    padding: 0 2px 0 8px;
}

.emoji-grid {
    display: grid;
    grid-template-columns: repeat(8, 40px);
    grid-auto-rows: 40px;
}

.emoji-grid button {
    padding-top: 4px;
    font-family: "Noto Color Emoji", "Noto Sans", sans-serif;
    font-size: 18px;
}

.emoji-grid span,
.emoji-grid svg {
    filter: drop-shadow(1px 0 #111) drop-shadow(-1px 0 #111) drop-shadow(0 1px #111) drop-shadow(0 -1px #111);
}

.emoji-grid svg {
    width: 22px;
    height: 22px;
}

.emoji-grid .line {
    fill: none;
    stroke: #fff;
    stroke-width: 2;
}

.emoji-grid .active {
    background-color: #2c5a6c;
}

.emoji-scroll {
    width: 2px;
    height: 113px;
    margin-top: 16px;
    background-color: #8a8a8a;
}

.emoji-cats {
    padding: 0 8px 5px;
}

.emoji-cats button {
    padding-top: 8px;
}

/* taskbar */
.taskbar {
    display: flex;
    flex: none;
    height: 40px;
    background-color: #1f1b24;
    color: #fff;
}

.taskbar button {
    width: 48px;
}

.taskbar .app {
    position: relative;
    margin-left: 1px;
}

.taskbar button:nth-child(3) {
    margin-left: 3px;
}

.taskbar .open::after {
    content: "";
    position: absolute;
    bottom: 0;
    left: 4px;
    right: 4px;
    height: 2px;
    background-color: #a5d8fa;
}

.taskbar .current {
    background-color: #48484c;
}

.taskbar .current::after {
    left: 0;
    right: 0;
}

.badge {
    position: absolute;
    right: 1px;
    bottom: 6px;
    padding: 0 2px;
    background-color: #808080;
    border-radius: 2px;
    font-size: 9px;
    line-height: 11px;
}

.tray {
    display: flex;
    align-items: center;
    gap: 10px;
    margin-left: auto;
    font-size: 12px;
}

.tray .dark {
    stroke: #1f1b24;
}

.tray .quiet {
    fill: #1f1b24;
}

.clock {
    width: 66px;
    line-height: 18px;
    text-align: center;
}

.peek {
    width: 5px;
    height: 40px;
    margin-left: 8px;
    border-left: 1px solid #777;
}
```
